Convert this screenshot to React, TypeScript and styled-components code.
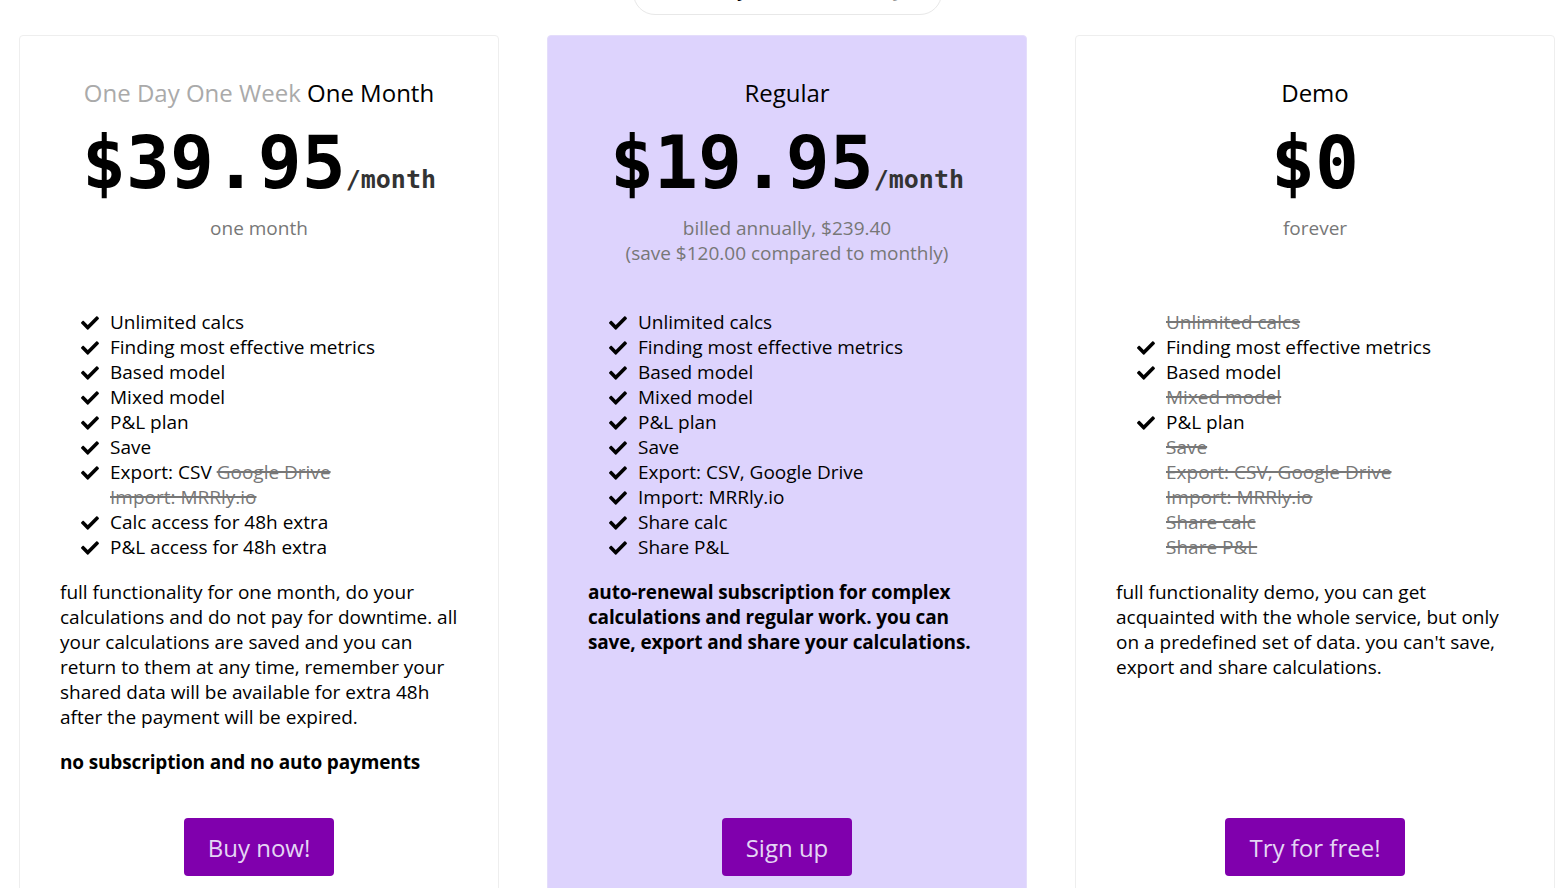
import React from "react";
import styled, { createGlobalStyle } from "styled-components";
import { FaCheck } from "react-icons/fa";

const Global = createGlobalStyle`
  html, body { margin: 0; padding: 0; background: #fff; }
  body { font-family: "Open Sans", "Noto Sans", sans-serif; color: #000; overflow: hidden; }
  * { box-sizing: border-box; }
`;

const Page = styled.div`
  width: 1568px;
  height: 888px;
  overflow: hidden;
  padding-left: 19px;
`;

const SwitchRow = styled.div`
  display: flex;
  justify-content: center;
  width: 1536px;
  height: 35px;
`;

const Pill = styled.div`
  margin-top: -32px;
  width: 309px;
  height: 47px;
  border: 1px solid #e8e8e8;
  border-radius: 22px;
  display: flex;
  justify-content: space-around;
  align-items: flex-start;
  padding-top: 6px;
  font-size: 20px;
  line-height: 28px;
`;

const PillItem = styled.span<{ $active?: boolean }>`
  color: ${(p) => (p.$active ? "#000" : "#999")};
`;

const Grid = styled.div`
  display: grid;
  grid-template-columns: repeat(3, 480px);
  gap: 48px;
`;

const Card = styled.div<{ $featured?: boolean }>`
  background: ${(p) => (p.$featured ? "#ddd3fd" : "#fff")};
  border: 1px solid ${(p) => (p.$featured ? "#e4ddfb" : "#eeeeee")};
  border-radius: 4px;
  height: 880px;
  padding: 39px 40px 0;
  display: flex;
  flex-direction: column;
`;

const Title = styled.div`
  text-align: center;
  font-size: 24px;
  line-height: 36px;
`;

const Dim = styled.span`
  color: #aaa;
`;

const Price = styled.div`
  display: flex;
  justify-content: center;
  align-items: baseline;
  font-family: "DejaVu Sans Mono", "Liberation Mono", monospace;
  font-weight: bold;
  margin-top: 11px;
  height: 82px;
`;

const Amount = styled.span`
  font-size: 73px;
  line-height: 82px;
`;

const Per = styled.span`
  font-size: 25px;
  color: #333;
`;

const Sub = styled.div`
  text-align: center;
  color: #777;
  font-size: 19px;
  line-height: 25px;
  margin-top: 12px;
  min-height: 94px;
`;

const List = styled.ul`
  list-style: none;
  margin: 0;
  padding: 0 0 0 20px;
  font-size: 19px;
  line-height: 25px;
`;

const Item = styled.li<{ $off?: boolean }>`
  display: flex;
  align-items: center;
  gap: 10px;
  color: ${(p) => (p.$off ? "#777" : "#000")};
  text-decoration: ${(p) => (p.$off ? "line-through" : "none")};
  text-decoration-thickness: 2px;
  padding-left: ${(p) => (p.$off ? "30px" : "0")};
`;

const Off = styled.span`
  color: #777;
  text-decoration: line-through;
  text-decoration-thickness: 2px;
`;

const Check = styled(FaCheck)`
  width: 20px;
  height: 18px;
  flex: none;
  color: #000;
`;

const Para = styled.p<{ $bold?: boolean }>`
  margin: 20px 0 0;
  font-size: 19px;
  line-height: 25px;
  font-weight: ${(p) => (p.$bold ? 700 : 400)};
  letter-spacing: ${(p) => (p.$bold ? "-0.15px" : "0")};
`;

const Spacer = styled.div`
  flex: 1;
`;

const Footer = styled.div`
  display: flex;
  justify-content: center;
  flex: none;
  padding-bottom: 38px;
`;

const Button = styled.button`
  height: 58px;
  padding: 0 24px;
  background: #8000ad;
  color: #e4d6f4;
  border: none;
  border-radius: 4px;
  font-family: "Open Sans", "Noto Sans", sans-serif;
  font-size: 24px;
  cursor: pointer;
`;

type Feat = { text: React.ReactNode; off?: boolean };

const Features = ({ items }: { items: Feat[] }) => (
  <List>
    {items.map((f, i) => (
      <Item key={i} $off={f.off}>
        {!f.off && <Check />}
        <span>{f.text}</span>
      </Item>
    ))}
  </List>
);

export default function App() {
  return (
    <Page>
      <Global />
      <SwitchRow>
        <Pill>
          <PillItem $active>Monthly</PillItem>
          <PillItem>Annually</PillItem>
        </Pill>
      </SwitchRow>
      <Grid>
        <Card>
          <Title>
            <Dim>One Day</Dim> <Dim>One Week</Dim> One Month
          </Title>
          <Price>
            <Amount>$39.95</Amount>
            <Per>/month</Per>
          </Price>
          <Sub>one month</Sub>
          <Features
            items={[
              { text: "Unlimited calcs" },
              { text: "Finding most effective metrics" },
              { text: "Based model" },
              { text: "Mixed model" },
              { text: "P&L plan" },
              { text: "Save" },
              { text: <>Export: CSV <Off>Google Drive</Off></> },
              { text: "Import: MRRly.io", off: true },
              { text: "Calc access for 48h extra" },
              { text: "P&L access for 48h extra" },
            ]}
          />
          <Para>
            full functionality for one month, do your calculations and do not pay for downtime. all your
            calculations are saved and you can return to them at any time, remember your shared data will be
            available for extra 48h after the payment will be expired.
          </Para>
          <Para $bold>no subscription and no auto payments</Para>
          <Spacer />
          <Footer>
            <Button>Buy now!</Button>
          </Footer>
        </Card>
        <Card $featured>
          <Title>Regular</Title>
          <Price>
            <Amount>$19.95</Amount>
            <Per>/month</Per>
          </Price>
          <Sub>
            billed annually, $239.40
            <br />
            (save $120.00 compared to monthly)
          </Sub>
          <Features
            items={[
              { text: "Unlimited calcs" },
              { text: "Finding most effective metrics" },
              { text: "Based model" },
              { text: "Mixed model" },
              { text: "P&L plan" },
              { text: "Save" },
              { text: "Export: CSV, Google Drive" },
              { text: "Import: MRRly.io" },
              { text: "Share calc" },
              { text: "Share P&L" },
            ]}
          />
          <Para $bold>
            auto-renewal subscription for complex calculations and regular work. you can save, export and share
            your calculations.
          </Para>
          <Spacer />
          <Footer>
            <Button>Sign up</Button>
          </Footer>
        </Card>
        <Card>
          <Title>Demo</Title>
          <Price>
            <Amount>$0</Amount>
          </Price>
          <Sub>forever</Sub>
          <Features
            items={[
              { text: "Unlimited calcs", off: true },
              { text: "Finding most effective metrics" },
              { text: "Based model" },
              { text: "Mixed model", off: true },
              { text: "P&L plan" },
              { text: "Save", off: true },
              { text: "Export: CSV, Google Drive", off: true },
              { text: "Import: MRRly.io", off: true },
              { text: "Share calc", off: true },
              { text: "Share P&L", off: true },
            ]}
          />
          <Para>
            full functionality demo, you can get acquainted with the whole service, but only on a predefined set
            of data. you can't save, export and share calculations.
          </Para>
          <Spacer />
          <Footer>
            <Button>Try for free!</Button>
          </Footer>
        </Card>
      </Grid>
    </Page>
  );
}
